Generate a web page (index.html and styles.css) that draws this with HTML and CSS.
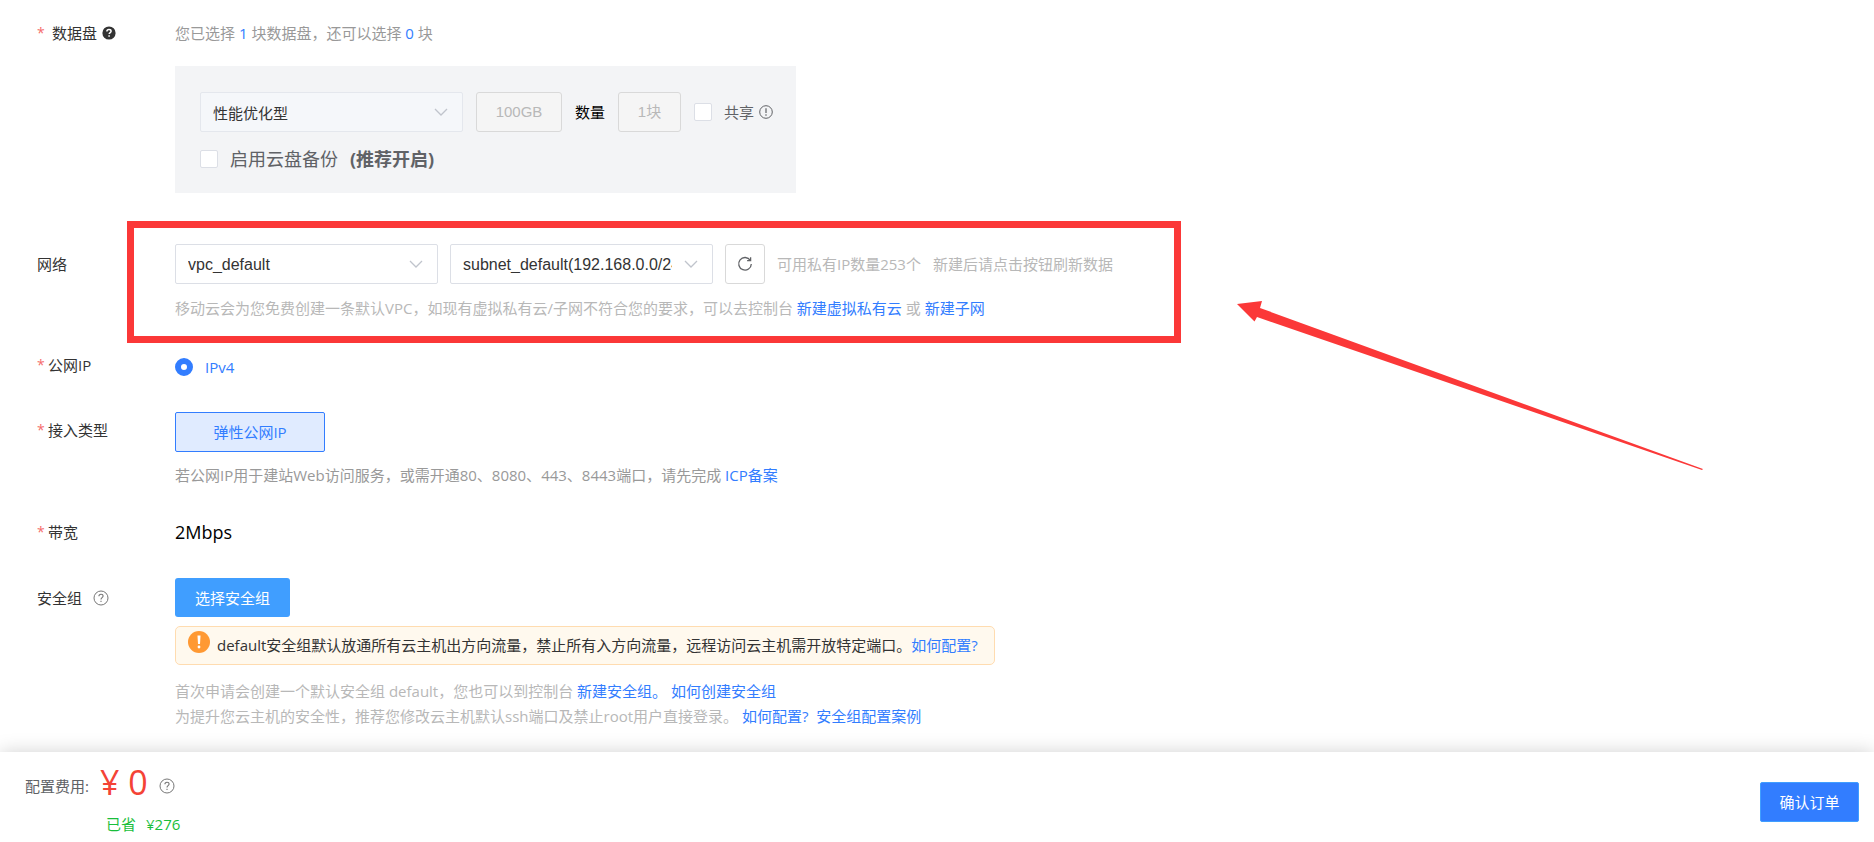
FILE: index.html
```html
<!DOCTYPE html>
<html lang="zh-CN">
<head>
<meta charset="utf-8">
<meta name="viewport" content="width=device-width, initial-scale=1">
<title>云主机订购</title>
<link rel="stylesheet" href="styles.css">
</head>
<body>
<svg class="sprite" aria-hidden="true">
  <symbol id="chevron" viewBox="0 0 14 8"><path d="M1 1l6 6 6-6" fill="none" stroke="currentColor" stroke-width="1.3"/></symbol>
  <symbol id="question" viewBox="0 0 16 16"><circle cx="8" cy="8" r="7" fill="none" stroke="currentColor"/><path d="M5.9 6.3c0-1.300.9-2.100 2.100-2.100s2.100.8 2.100 1.900c0 1.500-2.100 1.600-2.100 3.300M8 10.800v1.200" fill="none" stroke="currentColor" stroke-width="1.100"/></symbol>
</svg>
<main class="form">
  <section class="row row-disk">
    <div class="label"><span class="star">*</span><span class="label-wide">数据盘</span>
      <svg class="icon-solid" viewBox="0 0 14 14"><circle cx="7" cy="7" r="6.600" fill="#333"/><path d="M4.900 5.500c0-1.200.9-1.900 2.100-1.900s2.100.7 2.100 1.700c0 1.300-1.900 1.300-1.900 2.800M7.100 9.200v1.500" fill="none" stroke="#fff" stroke-width="1.500"/></svg>
    </div>
    <div class="control">
      <p class="summary">您已选择 <b>1</b> 块数据盘，还可以选择 <b>0</b> 块</p>
      <div class="panel">
        <div class="line">
          <span class="select disabled"><select class="cjk" aria-label="数据盘类型" disabled><option>性能优化型</option></select><svg class="chevron"><use href="#chevron"/></svg></span>
          <button class="chip chip-size" type="button" disabled>100GB</button>
          <span class="count">数量</span>
          <button class="chip" type="button" disabled>1块</button>
          <label class="check"><input type="checkbox"><span>共享</span></label>
          <svg class="icon-info" viewBox="0 0 14 14"><circle cx="7" cy="7" r="6.300" fill="none" stroke="#606266"/><path d="M7 3.300v4.700M7 9.300v1.400" stroke="#606266" stroke-width="1.200"/></svg>
        </div>
        <label class="check backup"><input type="checkbox"><span>启用云盘备份</span><strong>(推荐开启)</strong></label>
      </div>
    </div>
  </section>

  <section class="row row-network">
    <div class="label label-plain">网络</div>
    <div class="control">
      <div class="line">
        <span class="select"><select aria-label="虚拟私有云"><option>vpc_default</option></select><svg class="chevron"><use href="#chevron"/></svg></span>
        <span class="select"><select aria-label="子网"><option>subnet_default(192.168.0.0/24)</option></select><svg class="chevron"><use href="#chevron"/></svg></span>
        <button class="refresh" type="button" aria-label="刷新"><svg viewBox="0 0 16 16"><path d="M13.300 4.400A6.300 6.300 0 1 0 14.300 8M13.600 1.200v3.500h-3.500" fill="none" stroke="#606266" stroke-width="1.300"/></svg></button>
        <span class="muted">可用私有IP数量253个</span>
        <span class="muted">新建后请点击按钮刷新数据</span>
      </div>
      <p class="hint muted">移动云会为您免费创建一条默认VPC，如现有虚拟私有云/子网不符合您的要求，可以去控制台 <a href="#">新建虚拟私有云</a> 或 <a href="#">新建子网</a></p>
      <div class="frame"></div>
      <svg class="arrow" viewBox="0 0 466 170"><path d="M0 3L25 0 23 7 466 168 465 169 20 16 17.500 20.500Z" fill="#fb3838"/></svg>
    </div>
  </section>

  <section class="row">
    <div class="label"><span class="star">*</span>公网IP</div>
    <div class="control"><label class="radio"><input type="radio" name="ip" checked><span>IPv4</span></label></div>
  </section>

  <section class="row">
    <div class="label"><span class="star">*</span>接入类型</div>
    <div class="control">
      <button class="type" type="button">弹性公网IP</button>
      <p class="hint grey">若公网IP用于建站Web访问服务，或需开通80、8080、443、8443端口，请先完成 <a href="#">ICP备案</a></p>
    </div>
  </section>

  <section class="row">
    <div class="label"><span class="star">*</span>带宽</div>
    <div class="control bandwidth">2Mbps</div>
  </section>

  <section class="row">
    <div class="label label-plain">安全组<svg class="icon-q"><use href="#question"/></svg></div>
    <div class="control">
      <button class="choose" type="button">选择安全组</button>
      <div class="alert">
        <svg viewBox="0 0 24 24"><circle cx="12" cy="12" r="11" fill="#ff9933"/><path d="M10.500 5.500h3L13 14h-2z" fill="#fff"/><circle cx="12" cy="17" r="1.400" fill="#fff"/></svg>
        <p>default安全组默认放通所有云主机出方向流量，禁止所有入方向流量，远程访问云主机需开放特定端口。<a href="#">如何配置?</a></p>
      </div>
      <div class="notes muted">
        <p>首次申请会创建一个默认安全组 default，您也可以到控制台 <a href="#">新建安全组。</a> <a href="#">如何创建安全组</a></p>
        <p>为提升您云主机的安全性，推荐您修改云主机默认ssh端口及禁止root用户直接登录。 <a href="#">如何配置?</a>&nbsp; <a href="#">安全组配置案例</a></p>
      </div>
    </div>
  </section>
</main>

<footer class="bar">
  <div>
    <div class="price"><span>配置费用:</span><strong>¥ 0</strong><svg class="icon-q"><use href="#question"/></svg></div>
    <div class="saved"><span>已省</span><span>¥276</span></div>
  </div>
  <button class="submit" type="button">确认订单</button>
</footer>
</body>
</html>
```
FILE: styles.css
```css
* { box-sizing: border-box; }
body {
  margin: 0;
  min-height: 100vh;
  display: flex;
  flex-direction: column;
  background: #fff;
  color: #333;
  font: 15px/24px "Open Sans", "Noto Sans CJK SC", sans-serif;
}
p { margin: 0; }
a { color: #327dff; text-decoration: none; }
button, select, input { font: inherit; margin: 0; }
button { cursor: pointer; padding: 0; }
.sprite { display: none; }

.form { padding: 15px 37px 23px; display: flex; flex-direction: column; gap: 26px; }
.row { display: grid; grid-template-columns: 138px 1fr; }
.row-disk { margin-bottom: 25px; }
.label { display: flex; align-items: center; height: 36px; }
.label-plain { height: 40px; }
.star { color: #f56c6c; width: 11px; font-size: 14px; }
.label-wide { padding: 0 5px 0 4px; }
.control { min-width: 0; }
.muted { color: #b8b8b8; }
.grey { color: #999; }
.icon-solid { width: 14px; height: 14px; }
.icon-info { width: 14px; height: 14px; margin-left: -8px; }
.icon-q { width: 16px; height: 16px; margin-left: 11px; color: #777; }

.summary { line-height: 36px; color: #999; }
.summary b { color: #327dff; font-weight: 400; }
.panel { width: 621px; max-width: 100%; margin-top: 15px; padding: 26px 20px 22px 25px; background: #f3f4f6; }
.line { display: flex; align-items: center; gap: 12px; min-height: 40px; }
.line > * { flex: none; }
.panel .line { gap: 13px; }

.select { position: relative; display: block; width: 263px; color: #c0c4cc; }
.select select {
  appearance: none;
  display: block;
  width: 100%;
  height: 40px;
  padding: 0 40px 0 12px;
  border: 1px solid #dcdfe6;
  border-radius: 2px;
  background: #fff;
  color: #333;
  font: 16px "Liberation Sans", sans-serif;
}
.select .cjk { font: 15px "Noto Sans CJK SC", sans-serif; }
.disabled select { background: #f5f7fa; border-color: #e4e7ed; opacity: 1; }
.chevron { position: absolute; right: 15px; top: 16px; width: 14px; height: 8px; pointer-events: none; }

.chip {
  width: 63px;
  height: 40px;
  border: 1px solid #d9d9d9;
  border-radius: 3px;
  background: #f5f5f5;
  color: #b8b8b8;
  font-family: "Liberation Sans", "Noto Sans CJK SC", sans-serif;
}
.chip-size { width: 86px; }
.count { color: #000; }
.check { display: flex; align-items: center; gap: 12px; color: #606266; }
.check input {
  appearance: none;
  width: 18px;
  height: 18px;
  border: 1px solid #dcdfe6;
  border-radius: 2px;
  background: #fff;
}
.backup { margin-top: 15px; font-size: 18px; }

.row-network .control { position: relative; }
.refresh { width: 40px; height: 40px; border: 1px solid #d9d9d9; border-radius: 3px; background: #fff; display: grid; place-items: center; }
.refresh svg { width: 16px; height: 16px; }
.frame { position: absolute; left: -48px; top: -23px; width: 1054px; height: 122px; border: 7px solid #fb3838; pointer-events: none; }
.arrow { position: absolute; left: 1062px; top: 57px; width: 466px; height: 170px; pointer-events: none; }

.radio { display: inline-flex; align-items: center; gap: 12px; height: 39px; color: #327dff; }
.radio input { appearance: none; width: 18px; height: 18px; border: 6px solid #327dff; border-radius: 50%; background: #fff; }

.type { display: block; width: 150px; height: 40px; border: 1px solid #327dff; border-radius: 2px; background: #e0ebff; color: #327dff; }
.hint { margin-top: 11px; padding-bottom: 1px; }
.row-network .hint { margin-top: 12px; }
.bandwidth { min-height: 38px; font-size: 18px; line-height: 36px; color: #000; }

.choose { display: block; width: 115px; height: 39px; border: 0; border-radius: 3px; background: #409eff; color: #fff; }
.alert {
  display: flex;
  gap: 6px;
  width: fit-content;
  margin-top: 9px;
  padding: 3px 16px 3px 11px;
  border: 1px solid #ffdcb0;
  border-radius: 5px;
  background: #fff9ee;
}
.alert svg { flex: none; width: 24px; height: 24px; }
.alert p { padding: 4px 0; line-height: 23px; }
.notes { margin-top: 14px; line-height: 25px; }

.bar {
  margin-top: auto;
  display: flex;
  justify-content: space-between;
  align-items: flex-start;
  padding: 12px 15px 4px 25px;
  background: #fff;
  box-shadow: 0 0 18px rgba(0, 0, 0, 0.18);
}
.price { display: flex; align-items: center; height: 44px; color: #606266; }
.price strong { margin-left: 11px; font-size: 34px; font-weight: 400; line-height: 36px; color: #f44336; align-self: flex-start; }
.saved { display: flex; gap: 10px; margin-left: 81px; padding: 4px 0; color: #19be3b; }
.submit { width: 99px; height: 40px; margin-top: 18px; border: 1px solid #409eff; border-radius: 2px; background: #327dff; color: #fff; }
```
